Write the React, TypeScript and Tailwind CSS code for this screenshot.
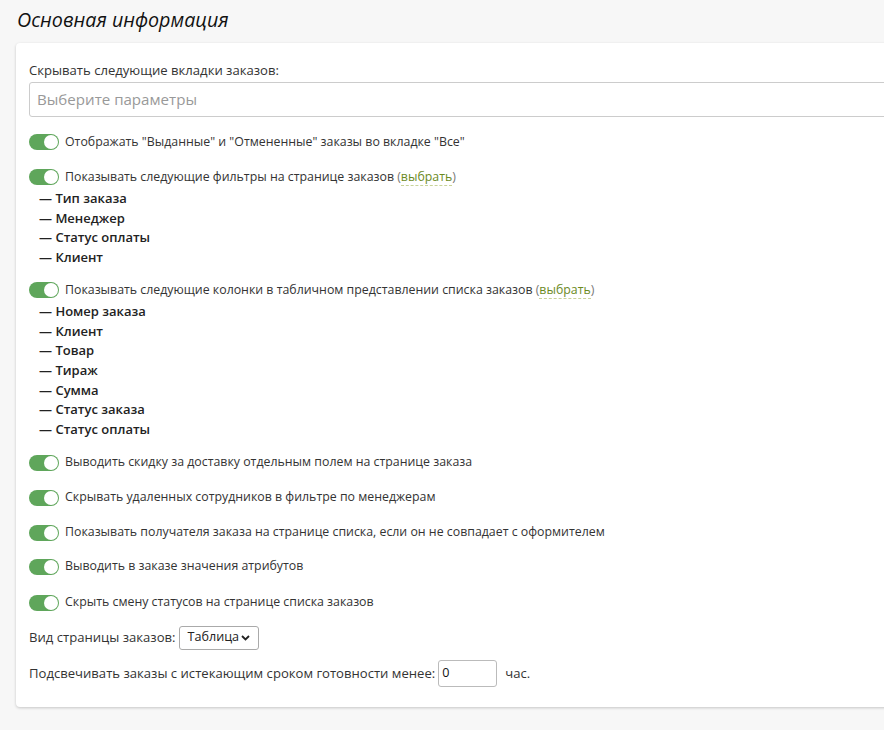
function Toggle() {
  return (
    <span className="relative inline-block w-[30px] h-[16px] rounded-full bg-[#5fa65b] shrink-0 mr-[6px]">
      <span className="absolute right-[1px] top-[1px] w-[14px] h-[14px] rounded-full bg-white" />
    </span>
  );
}

function ToggleRow({ children, className = "" }: { children: React.ReactNode; className?: string }) {
  return (
    <div className={"flex items-center h-[20px] text-[12.35px] " + className}>
      <Toggle />
      <span>{children}</span>
    </div>
  );
}

function PickLink() {
  return (
    <span className="text-[#777]">
      (<span className="text-[#6b8a1e] border-b border-dashed border-[#c8d39a]">выбрать</span>)
    </span>
  );
}

function DashList({ items, className = "" }: { items: string[]; className?: string }) {
  return (
    <ul className={"pl-[10px] text-[13px] font-semibold text-[#222] leading-[19.7px] " + className}>
      {items.map((it) => (
        <li key={it}>— {it}</li>
      ))}
    </ul>
  );
}

export default function App() {
  return (
    <div className="min-h-[730px] w-[884px] overflow-hidden bg-[#f7f7f7] font-['Open_Sans',sans-serif] text-[13.1px] text-[#333]">
      <h2 className="pl-[17px] pt-[6px] h-[43px] italic text-[19.7px] leading-[28px] text-[#111]">
        Основная информация
      </h2>
      <div className="ml-[16px] w-[960px] bg-white rounded-[4px] shadow-[0_1px_3px_rgba(0,0,0,0.2)] pl-[13px] pt-[17px] pb-[19px]">
        <div className="leading-[20px]">Скрывать следующие вкладки заказов:</div>
        <div className="mt-[2px] h-[35px] border border-[#ccc] rounded-[3px] flex items-center pl-[7px] text-[15.1px] text-[#999]">
          Выберите параметры
        </div>

        <ToggleRow className="mt-[15px]">
          Отображать "Выданные" и "Отмененные" заказы во вкладке "Все"
        </ToggleRow>

        <ToggleRow className="mt-[15px]">
          Показывать следующие фильтры на странице заказов <PickLink />
        </ToggleRow>
        <DashList className="mt-[2px]" items={["Тип заказа", "Менеджер", "Статус оплаты", "Клиент"]} />

        <ToggleRow className="mt-[12px]">
          Показывать следующие колонки в табличном представлении списка заказов <PickLink />
        </ToggleRow>
        <DashList
          className="mt-[2px]"
          items={["Номер заказа", "Клиент", "Товар", "Тираж", "Сумма", "Статус заказа", "Статус оплаты"]}
        />

        <ToggleRow className="mt-[13px]">Выводить скидку за доставку отдельным полем на странице заказа</ToggleRow>
        <ToggleRow className="mt-[15px]">Скрывать удаленных сотрудников в фильтре по менеджерам</ToggleRow>
        <ToggleRow className="mt-[15px]">
          Показывать получателя заказа на странице списка, если он не совпадает с оформителем
        </ToggleRow>
        <ToggleRow className="mt-[14px]">Выводить в заказе значения атрибутов</ToggleRow>
        <ToggleRow className="mt-[16px]">Скрыть смену статусов на странице списка заказов</ToggleRow>

        <div className="mt-[13px] flex items-center h-[24px]">
          <span>Вид страницы заказов:</span>
          <div className="ml-[3px] w-[80px] h-[24px] border border-[#aaa] rounded-[3px] flex items-center justify-between pl-[8px] pr-[8px] text-[12.6px] text-[#222]">
            <span>Таблица</span>
            <svg width="9" height="6" viewBox="0 0 9 6">
              <path d="M1 1 L4.5 4.5 L8 1" fill="none" stroke="#222" strokeWidth="1.8" />
            </svg>
          </div>
        </div>

        <div className="mt-[10px] flex items-center h-[28px]">
          <span>Подсвечивать заказы с истекающим сроком готовности менее:</span>
          <div className="ml-[3px] w-[59px] h-[27px] border border-[#bbb] rounded-[3px] flex items-center pl-[3px] text-[12.6px] text-[#111]">
            0
          </div>
          <span className="ml-[8px]">час.</span>
        </div>
      </div>
    </div>
  );
}
